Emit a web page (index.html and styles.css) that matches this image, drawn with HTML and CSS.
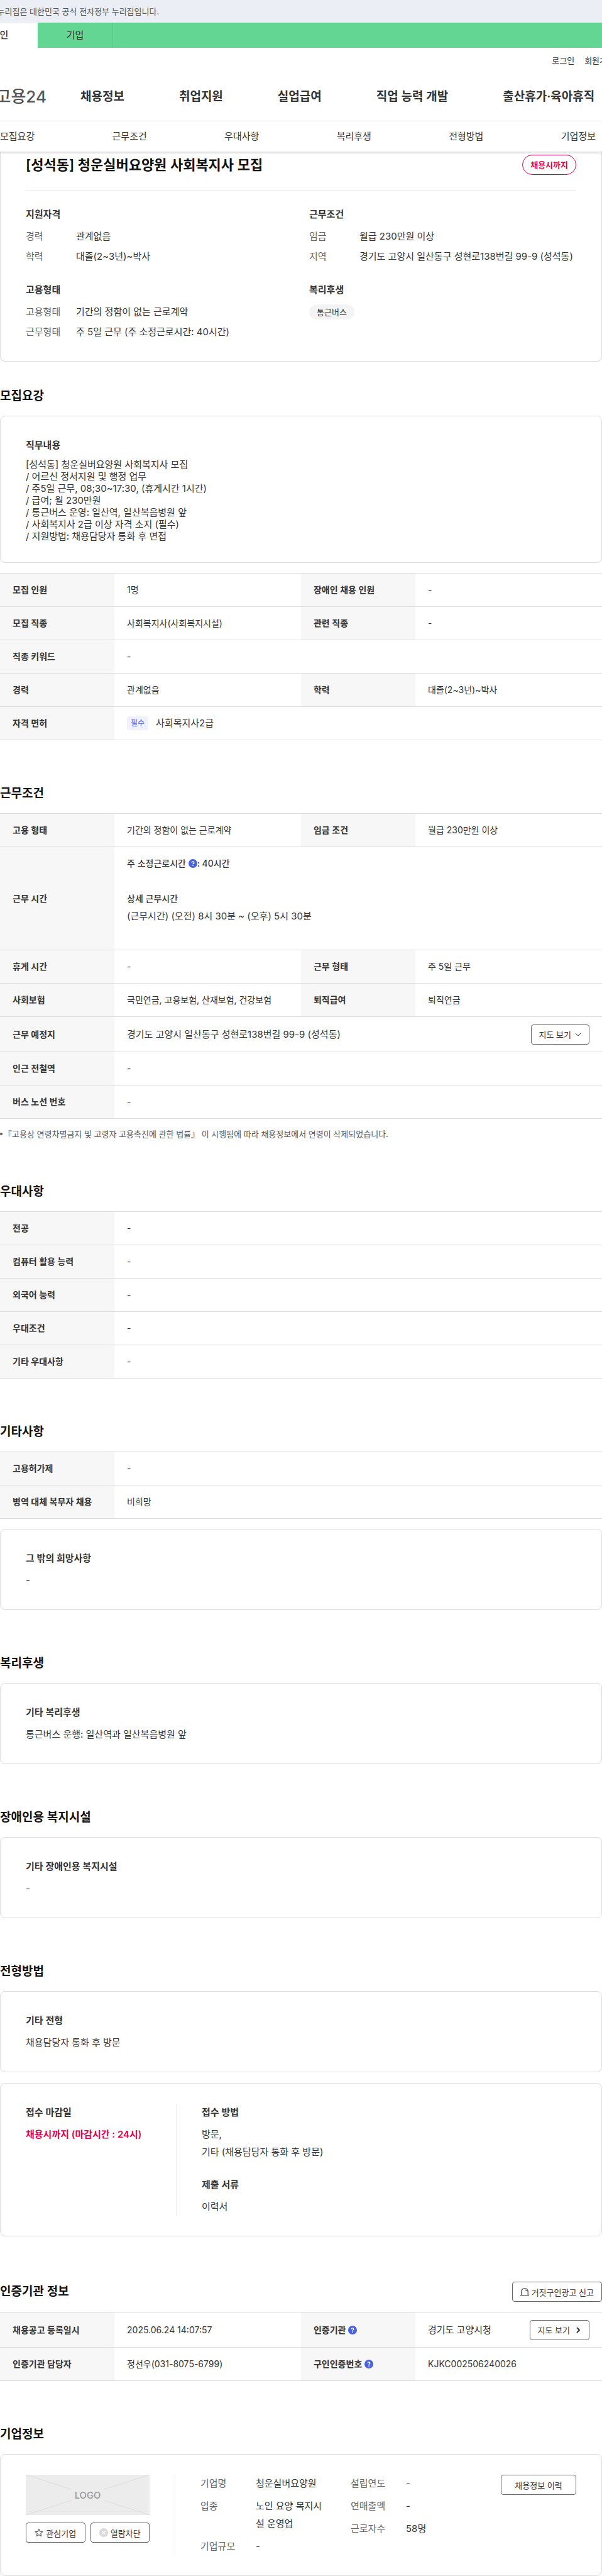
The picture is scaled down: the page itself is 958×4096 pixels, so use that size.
FILE: index.html
```html
<!DOCTYPE html>
<html lang="ko">
<head>
  <meta charset="UTF-8">
  <meta name="viewport" content="width=device-width, initial-scale=1">
  <title>[성석동] 청운실버요양원 사회복지사 모집</title>
  <link rel="stylesheet" href="styles.css">
</head>
<body>
  <!-- 아이콘 -->
  <svg class="sprite" aria-hidden="true">
    <symbol id="icon-help" viewBox="0 0 14 14">
      <circle cx="7" cy="7" r="7" fill="#4b62e0"/>
      <path d="M5.2 5.6c0-1 .8-1.700 1.800-1.700s1.800.6 1.800 1.500c0 1.200-1.700 1.200-1.700 2.500" fill="none" stroke="#fff" stroke-width="1.400"/>
      <circle cx="7.100" cy="10" r=".9" fill="#fff"/>
    </symbol>
    <symbol id="icon-siren" viewBox="0 0 14 14">
      <path d="M1.800 12.500V6.700a5.200 5.200 0 0 1 10.400 0v5.800M0 12.500h14M7.800 4c1 .2 1.700.9 1.900 1.900" fill="none" stroke="#333" stroke-width="1.200"/>
    </symbol>
    <symbol id="icon-star" viewBox="0 0 16 16">
      <path d="M8 1.600l2 4.300 4.700.5-3.500 3.200 1 4.700L8 11.900l-4.200 2.400 1-4.700L1.300 6.400 6 5.900z" fill="none" stroke="#555" stroke-width="1.300" stroke-linejoin="round"/>
    </symbol>
    <symbol id="icon-block" viewBox="0 0 14 14">
      <circle cx="7" cy="7" r="7" fill="#d8d8d8"/>
      <path d="M4.300 4.300l5.400 5.400M9.700 4.300L4.300 9.700" stroke="#fff" stroke-width="1.600"/>
    </symbol>
  </svg>

  <header class="header">
    <div class="gov-banner"><p>이 누리집은 대한민국 공식 전자정부 누리집입니다.</p></div>
    <div class="site-tabs">
      <a class="on" href="#">개인</a>
      <a href="#">기업</a>
    </div>
    <div class="util">
      <a href="#">로그인</a>
      <a href="#">회원가입</a>
    </div>
    <div class="gnb">
      <a class="logo" href="#">고용24</a>
      <nav class="gnb-menu">
        <a href="#">채용정보</a>
        <a href="#">취업지원</a>
        <a href="#">실업급여</a>
        <a href="#">직업 능력 개발</a>
        <a href="#">출산휴가·육아휴직</a>
      </nav>
    </div>
  </header>

  <nav class="anchor-tabs">
    <a href="#recruit">모집요강</a>
    <a href="#work">근무조건</a>
    <a href="#prefer">우대사항</a>
    <a href="#welfare">복리후생</a>
    <a href="#process">전형방법</a>
    <a href="#company">기업정보</a>
  </nav>

  <main>
    <!-- 요약 -->
    <div class="card summary">
      <div class="summary-head">
        <h1>[성석동] 청운실버요양원 사회복지사 모집</h1>
        <span class="deadline">채용시까지</span>
      </div>
      <div class="summary-grid">
        <div>
          <h3>지원자격</h3>
          <dl>
            <dt>경력</dt><dd>관계없음</dd>
            <dt>학력</dt><dd>대졸(2~3년)~박사</dd>
          </dl>
        </div>
        <div>
          <h3>근무조건</h3>
          <dl>
            <dt>임금</dt><dd>월급 230만원 이상</dd>
            <dt>지역</dt><dd>경기도 고양시 일산동구 성현로138번길 99-9 (성석동)</dd>
          </dl>
        </div>
        <div>
          <h3>고용형태</h3>
          <dl>
            <dt>고용형태</dt><dd>기간의 정함이 없는 근로계약</dd>
            <dt>근무형태</dt><dd>주 5일 근무 (주 소정근로시간: 40시간)</dd>
          </dl>
        </div>
        <div>
          <h3>복리후생</h3>
          <span class="chip">통근버스</span>
        </div>
      </div>
    </div>

    <!-- 모집요강 -->
    <section class="first" id="recruit">
      <h2>모집요강</h2>
      <div class="card">
        <h3>직무내용</h3>
        <p class="job-text">[성석동] 청운실버요양원 사회복지사 모집<br>
          / 어르신 정서지원 및 행정 업무<br>
          / 주5일 근무, 08;30~17:30, (휴게시간 1시간)<br>
          / 급여; 월 230만원<br>
          / 통근버스 운영: 일산역, 일산복음병원 앞<br>
          / 사회복지사 2급 이상 자격 소지 (필수)<br>
          / 지원방법: 채용담당자 통화 후 면접</p>
      </div>
      <table>
        <tr><th scope="row">모집 인원</th><td>1명</td><th scope="row">장애인 채용 인원</th><td>-</td></tr>
        <tr><th scope="row">모집 직종</th><td>사회복지사(사회복지시설)</td><th scope="row">관련 직종</th><td>-</td></tr>
        <tr><th scope="row">직종 키워드</th><td colspan="3">-</td></tr>
        <tr><th scope="row">경력</th><td>관계없음</td><th scope="row">학력</th><td>대졸(2~3년)~박사</td></tr>
        <tr><th scope="row">자격 면허</th><td colspan="3"><div class="license"><span class="badge">필수</span>사회복지사2급</div></td></tr>
      </table>
    </section>

    <!-- 근무조건 -->
    <section id="work">
      <h2>근무조건</h2>
      <table>
        <tr><th scope="row">고용 형태</th><td>기간의 정함이 없는 근로계약</td><th scope="row">임금 조건</th><td>월급 230만원 이상</td></tr>
        <tr>
          <th scope="row">근무 시간</th>
          <td colspan="3" class="work-time">
            <strong>주 소정근로시간 <svg class="help"><use href="#icon-help"/></svg>: 40시간</strong>
            <strong>상세 근무시간</strong>
            <p>(근무시간) (오전) 8시 30분 ~ (오후) 5시 30분</p>
          </td>
        </tr>
        <tr><th scope="row">휴게 시간</th><td>-</td><th scope="row">근무 형태</th><td>주 5일 근무</td></tr>
        <tr><th scope="row">사회보험</th><td>국민연금, 고용보험, 산재보험, 건강보험</td><th scope="row">퇴직급여</th><td>퇴직연금</td></tr>
        <tr class="with-btn">
          <th scope="row">근무 예정지</th>
          <td colspan="3">
            <div class="cell-row">
              경기도 고양시 일산동구 성현로138번길 99-9 (성석동)
              <button type="button" class="btn">지도 보기 <svg class="chevron" viewBox="0 0 10 10"><path d="M1 3l4 4 4-4"/></svg></button>
            </div>
          </td>
        </tr>
        <tr><th scope="row">인근 전철역</th><td colspan="3">-</td></tr>
        <tr><th scope="row">버스 노선 번호</th><td colspan="3">-</td></tr>
      </table>
      <p class="note">『고용상 연령차별금지 및 고령자 고용촉진에 관한 법률』 이 시행됨에 따라 채용정보에서 연령이 삭제되었습니다.</p>
    </section>

    <!-- 우대사항 -->
    <section id="prefer">
      <h2>우대사항</h2>
      <table>
        <tr><th scope="row">전공</th><td colspan="3">-</td></tr>
        <tr><th scope="row">컴퓨터 활용 능력</th><td colspan="3">-</td></tr>
        <tr><th scope="row">외국어 능력</th><td colspan="3">-</td></tr>
        <tr><th scope="row">우대조건</th><td colspan="3">-</td></tr>
        <tr><th scope="row">기타 우대사항</th><td colspan="3">-</td></tr>
      </table>
    </section>

    <section>
      <h2>기타사항</h2>
      <table>
        <tr><th scope="row">고용허가제</th><td colspan="3">-</td></tr>
        <tr><th scope="row">병역 대체 복무자 채용</th><td colspan="3">비희망</td></tr>
      </table>
      <div class="card">
        <h3>그 밖의 희망사항</h3>
        <p>-</p>
      </div>
    </section>

    <section id="welfare">
      <h2>복리후생</h2>
      <div class="card">
        <h3>기타 복리후생</h3>
        <p>통근버스 운행: 일산역과 일산복음병원 앞</p>
      </div>
    </section>

    <section>
      <h2>장애인용 복지시설</h2>
      <div class="card">
        <h3>기타 장애인용 복지시설</h3>
        <p>-</p>
      </div>
    </section>

    <!-- 전형방법 -->
    <section id="process">
      <h2>전형방법</h2>
      <div class="card">
        <h3>기타 전형</h3>
        <p>채용담당자 통화 후 방문</p>
      </div>
      <div class="card split">
        <div class="split-left">
          <h3>접수 마감일</h3>
          <p class="red">채용시까지 (마감시간 : 24시)</p>
        </div>
        <div class="split-right">
          <h3>접수 방법</h3>
          <p>방문,<br>기타 (채용담당자 통화 후 방문)</p>
          <h3>제출 서류</h3>
          <p>이력서</p>
        </div>
      </div>
    </section>

    <!-- 인증기관 -->
    <section class="agency">
      <div class="title-row">
        <h2>인증기관 정보</h2>
        <button type="button" class="btn"><svg class="icon"><use href="#icon-siren"/></svg>거짓구인광고 신고</button>
      </div>
      <table>
        <tr class="with-btn">
          <th scope="row">채용공고 등록일시</th><td>2025.06.24 14:07:57</td>
          <th scope="row">인증기관 <svg class="help"><use href="#icon-help"/></svg></th>
          <td>
            <div class="cell-row">
              경기도 고양시청
              <button type="button" class="btn">지도 보기 <svg class="chevron bold" viewBox="0 0 10 10"><path d="M3 1l4 4-4 4"/></svg></button>
            </div>
          </td>
        </tr>
        <tr>
          <th scope="row">인증기관 담당자</th><td>정선우(031-8075-6799)</td>
          <th scope="row">구인인증번호 <svg class="help"><use href="#icon-help"/></svg></th><td>KJKC002506240026</td>
        </tr>
      </table>
    </section>

    <!-- 기업정보 -->
    <section id="company">
      <h2>기업정보</h2>
      <div class="card split">
        <div class="split-left">
          <svg class="company-logo" viewBox="0 0 200 64" preserveAspectRatio="none" role="img" aria-label="LOGO">
            <rect width="200" height="64" fill="#ececec"/>
            <path d="M0 0l73 23M200 0l-73 23M0 64l73-23M200 64l-73-23" stroke="#dcdcdc"/>
            <text x="100" y="38" text-anchor="middle">LOGO</text>
          </svg>
          <div class="btn-pair">
            <button type="button" class="btn"><svg class="icon"><use href="#icon-star"/></svg>관심기업</button>
            <button type="button" class="btn"><svg class="icon"><use href="#icon-block"/></svg>열람차단</button>
          </div>
        </div>
        <div class="split-right company-info">
          <dl>
            <dt>기업명</dt><dd>청운실버요양원</dd>
            <dt>업종</dt><dd>노인 요양 복지시설 운영업</dd>
            <dt>기업규모</dt><dd>-</dd>
          </dl>
          <dl>
            <dt>설립연도</dt><dd>-</dd>
            <dt>연매출액</dt><dd>-</dd>
            <dt>근로자수</dt><dd>58명</dd>
          </dl>
          <button type="button" class="btn history">채용정보 이력</button>
        </div>
      </div>
    </section>
  </main>
</body>
</html>
```

FILE: styles.css
```css
* {
  box-sizing: border-box;
}
body {
  margin: 0;
  background: #fff;
  color: #333;
  font-family: Inter, "Noto Sans CJK KR", sans-serif;
  font-size: 15px;
  line-height: 28px;
}
a {
  color: inherit;
  text-decoration: none;
}
h1, h2, h3, p, dl, dd {
  margin: 0;
}
.sprite {
  display: none;
}

/* header */
.header {
  overflow: hidden;
}
.gov-banner {
  height: 36px;
  margin-left: -20px;
  background: #ebeff5;
  color: #555;
  font-size: 13px;
  line-height: 36px;
  white-space: nowrap;
}
.site-tabs {
  display: flex;
  margin-left: -60px;
  background: #63d694;
}
.site-tabs a {
  width: 120px;
  line-height: 40px;
  text-align: center;
  border-right: 1px solid #58c888;
}
.site-tabs .on {
  background: #fff;
  border-color: #fff;
  font-weight: 500;
}
.util {
  display: flex;
  justify-content: flex-end;
  gap: 16px;
  margin-right: -60px;
  padding: 6px 40px;
  font-size: 13px;
}
.gnb {
  display: flex;
  align-items: center;
  gap: 54px;
  height: 76px;
  margin: 0 -60px;
  white-space: nowrap;
}
.logo {
  width: 134px;
  color: #555;
  font-size: 26px;
  font-weight: 500;
  text-align: right;
}
.gnb-menu {
  display: flex;
  gap: 87px;
  font-size: 19px;
  font-weight: 600;
}
.anchor-tabs {
  position: relative;
  z-index: 1;
  display: flex;
  justify-content: space-between;
  padding: 10px 10px 10px 0;
  background: #fff;
  border-top: 1px solid #eee;
  box-shadow: 0 2px 4px rgba(0, 0, 0, 0.16);
}

/* card */
.card {
  padding: 32px 40px;
  border: 1px solid #dcdcdc;
  border-radius: 8px;
}
h3 {
  margin-bottom: 8px;
  font-size: 15px;
  font-weight: 600;
  line-height: 27px;
}
.card + table,
table + .card {
  margin-top: 16px;
}
.card + .card {
  margin-top: 17px;
}

/* summary */
.summary {
  padding-top: 5px;
  border-top: 0;
  border-radius: 0 0 8px 8px;
}
.summary-head {
  display: flex;
  justify-content: space-between;
  padding-bottom: 24px;
  border-bottom: 1px solid #ececec;
}
h1 {
  color: #111;
  font-size: 22px;
  font-weight: 600;
  line-height: 32px;
}
.deadline {
  padding: 0 12px;
  border: 1px solid #e0004d;
  border-radius: 16px;
  color: #e0004d;
  font-size: 13px;
  font-weight: 600;
  line-height: 30px;
}
.summary-grid {
  display: grid;
  grid-template-columns: 411px 1fr;
  column-gap: 40px;
  row-gap: 25px;
  padding-top: 24px;
}
dl {
  display: grid;
  grid-template-columns: 80px 1fr;
  row-gap: 4px;
}
dt {
  color: #666;
}
.chip {
  display: inline-block;
  padding: 0 12px;
  border-radius: 12px;
  background: #f4f4f4;
  font-size: 13px;
  line-height: 24px;
}

/* section */
section {
  padding-top: 69px;
}
section.first {
  padding-top: 39px;
}
section.agency {
  padding-top: 72px;
}
h2 {
  margin-bottom: 15px;
  color: #111;
  font-size: 19px;
  font-weight: 600;
  line-height: 32px;
}
.title-row {
  display: flex;
  justify-content: space-between;
  margin-bottom: 16px;
}
.title-row h2 {
  margin: 0;
}
.job-text {
  line-height: 19px;
}

/* table */
table {
  width: 100%;
  border-spacing: 0;
  border-top: 1px solid #dcdcdc;
  table-layout: fixed;
}
th, td {
  height: 53px;
  padding: 0 20px;
  border-bottom: 1px solid #dcdcdc;
  font-size: 14px;
  text-align: left;
}
th {
  width: 19%;
  background: #f7f7f7;
  font-weight: 600;
}
td {
  width: 31%;
}
td[colspan] {
  width: 81%;
}
.with-btn th,
.with-btn td {
  height: 56px;
}
.cell-row,
.license {
  display: flex;
  align-items: center;
  justify-content: space-between;
  font-size: 15px;
}
.license {
  justify-content: flex-start;
  gap: 12px;
}
.badge {
  padding: 0 6px;
  border-radius: 4px;
  background: #f0f1fe;
  color: #4b62e0;
  font-size: 12px;
  line-height: 22px;
}
td.work-time {
  padding: 12px 20px 39px;
}
.work-time strong {
  display: block;
  font-weight: 500;
}
.work-time strong + strong {
  margin-top: 28px;
}
.work-time p {
  font-size: 15px;
}
.help {
  width: 14px;
  height: 14px;
  vertical-align: -2px;
}
.note {
  display: flex;
  align-items: center;
  gap: 2px;
  height: 31px;
  padding-top: 16px;
  color: #555;
  font-size: 13px;
}
.note::before {
  content: '';
  width: 4px;
  height: 4px;
  border-radius: 50%;
  background: #555;
}

/* button */
.btn {
  display: inline-flex;
  align-items: center;
  justify-content: center;
  gap: 4px;
  height: 32px;
  padding: 0 12px;
  border: 1px solid #666;
  border-radius: 4px;
  background: #fff;
  color: #333;
  font-family: inherit;
  font-size: 13px;
  white-space: nowrap;
}
.icon {
  width: 14px;
  height: 14px;
}
.chevron {
  width: 10px;
  height: 10px;
  margin-left: 2px;
  fill: none;
  stroke: #333;
  stroke-width: 1px;
}
.chevron.bold {
  margin-left: 4px;
  stroke-width: 2px;
}

/* split card */
.split {
  display: flex;
}
.split-left {
  width: 240px;
  padding-right: 40px;
  border-right: 1px solid #ececec;
  white-space: nowrap;
}
.split-right {
  flex: 1;
  padding-left: 40px;
}
.split-right p + h3 {
  margin-top: 24px;
}
.red {
  color: #e0004d;
  font-weight: 600;
}
.company-logo {
  display: block;
  width: 100%;
  height: 64px;
}
.company-logo text {
  fill: #999;
  font-size: 15px;
  font-weight: 500;
}
.btn-pair {
  display: grid;
  grid-template-columns: 1fr 1fr;
  gap: 8px;
  margin-top: 12px;
}
.btn-pair .btn {
  padding: 0;
}
.company-info {
  display: flex;
  align-items: flex-start;
}
.company-info dl {
  grid-template-columns: 88px 1fr;
  row-gap: 8px;
  width: 239px;
  padding-right: 40px;
}
.company-info dd {
  word-break: break-all;
}
.history {
  width: 120px;
  margin-left: auto;
}
```
